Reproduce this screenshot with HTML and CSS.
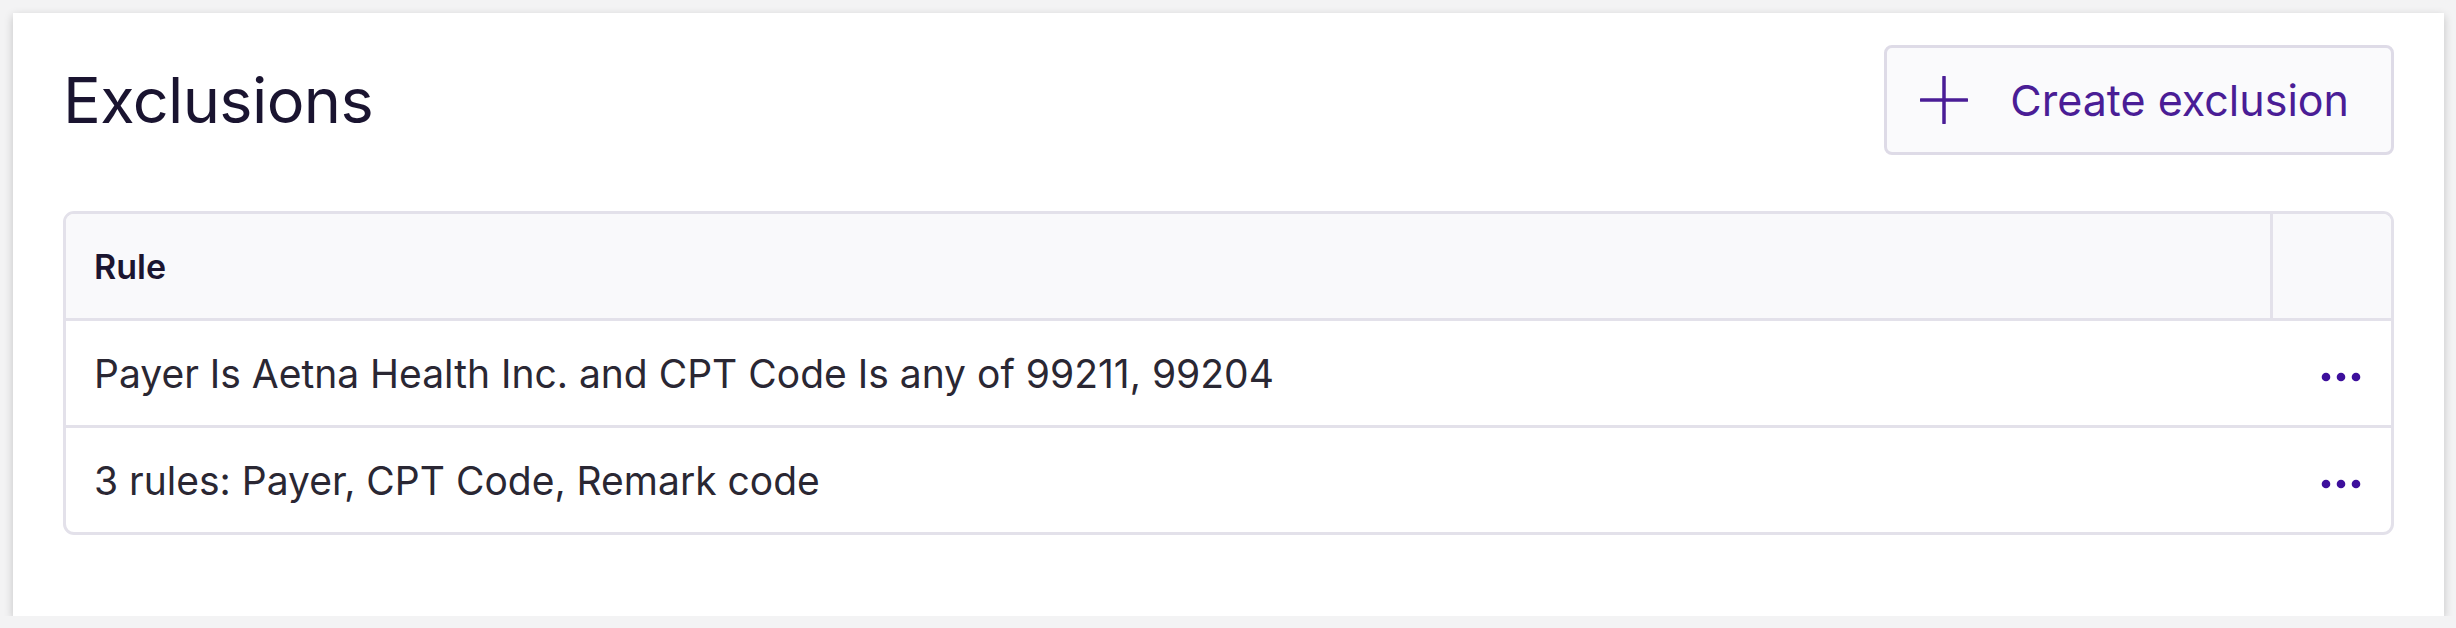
FILE: index.html
```html
<!DOCTYPE html>
<html lang="en">
<head>
    <meta charset="UTF-8">
    <meta name="viewport" content="width=device-width, initial-scale=1.0">
    <title>Exclusions</title>
    <link rel="stylesheet" href="styles.css">
</head>
<body>
    <section class="panel">
        <div class="panel-head">
            <h1>Exclusions</h1>
            <button class="btn-create">
                <svg class="icon-plus" viewBox="0 0 48 48" width="48" height="48" aria-hidden="true">
                    <path d="M24 1v46M1 24h46" stroke="currentColor" stroke-width="3.5" stroke-linecap="round" fill="none"/>
                </svg>
                <span>Create exclusion</span>
            </button>
        </div>

        <div class="table-wrap">
            <table class="rules">
                <thead>
                    <tr>
                        <th>Rule</th>
                        <th class="col-actions"></th>
                    </tr>
                </thead>
                <tbody>
                    <tr>
                        <td>Payer Is Aetna Health Inc. and CPT Code Is any of 99211, 99204</td>
                        <td class="col-actions">
                            <button class="btn-more" aria-label="More actions">
                                <svg viewBox="0 0 40 10" width="40" height="10"><circle cx="5" cy="5" r="4.3"/><circle cx="20" cy="5" r="4.3"/><circle cx="35" cy="5" r="4.3"/></svg>
                            </button>
                        </td>
                    </tr>
                    <tr>
                        <td>3 rules: Payer, CPT Code, Remark code</td>
                        <td class="col-actions">
                            <button class="btn-more" aria-label="More actions">
                                <svg viewBox="0 0 40 10" width="40" height="10"><circle cx="5" cy="5" r="4.3"/><circle cx="20" cy="5" r="4.3"/><circle cx="35" cy="5" r="4.3"/></svg>
                            </button>
                        </td>
                    </tr>
                </tbody>
            </table>
        </div>
    </section>
</body>
</html>
```

FILE: styles.css
```css
body {
    margin: 0;
    background-color: #f3f3f4;
    font-family: Inter, "Noto Sans", sans-serif;
    color: #24212c;
}

.panel {
    margin: 13px 12px 0 13px;
    padding: 32px 50px 81px 50px;
    background-color: #fff;
    box-shadow: 0 3px 9px rgba(0, 0, 0, 0.2);
}

.panel-head {
    display: flex;
    justify-content: space-between;
    align-items: center;
    margin-bottom: 56px;
}

h1 {
    margin: 0;
    font-size: 63px;
    font-weight: 400;
    color: #1a1430;
    letter-spacing: -0.6px;
}

.btn-create {
    display: flex;
    align-items: center;
    gap: 42px;
    height: 110px;
    padding: 0 42px 0 33px;
    background-color: #fafafc;
    border: 3px solid #dedbe7;
    border-radius: 8px;
    font-family: inherit;
    font-size: 43px;
    color: #4a1d96;
}

.icon-plus {
    display: block;
}

.table-wrap {
    border: 3px solid #e3e1ea;
    border-radius: 11px;
    overflow: hidden;
}

.rules {
    width: 100%;
    border-collapse: collapse;
}

.rules th {
    height: 104px;
    padding: 0 0 0 28px;
    text-align: left;
    font-size: 34px;
    font-weight: 600;
    color: #1b1530;
    background-color: #f9f9fb;
    border-bottom: 3px solid #e3e1ea;
}

.rules th.col-actions {
    padding: 0;
    border-left: 3px solid #e3e1ea;
}

.rules td {
    height: 104px;
    padding: 0 0 0 28px;
    font-size: 39px;
    color: #2a2733;
    border-bottom: 3px solid #e3e1ea;
}

.rules tr:last-child td {
    border-bottom: none;
}

.col-actions {
    width: 90px;
}

.rules td.col-actions {
    padding: 0 30px 0 0;
    text-align: right;
}

.btn-more {
    padding: 0;
    border: none;
    background: none;
    fill: #3d0f9c;
    vertical-align: middle;
}

.btn-more svg {
    display: block;
    margin-left: auto;
}
```
